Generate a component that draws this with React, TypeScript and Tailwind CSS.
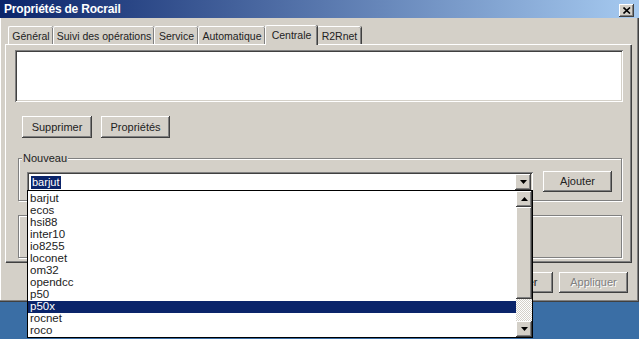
import React from 'react';

const raised =
  'bg-[#d4d0c8] shadow-[inset_-1px_-1px_0_#404040,inset_1px_1px_0_#ffffff,inset_-2px_-2px_0_#808080,inset_2px_2px_0_#d4d0c8]';
const sunken =
  'bg-white shadow-[inset_1px_1px_0_#808080,inset_-1px_-1px_0_#ffffff,inset_2px_2px_0_#404040,inset_-2px_-2px_0_#d4d0c8]';
const etched = 'border border-[#808080] shadow-[1px_1px_0_#ffffff,inset_1px_1px_0_#ffffff]';

const tabs = [
  { label: 'Général', w: 'w-[45px]' },
  { label: 'Suivi des opérations', w: 'w-[101px]' },
  { label: 'Service', w: 'w-[44px]' },
  { label: 'Automatique', w: 'w-[67px]' },
  { label: 'Centrale', w: 'w-[52px]', active: true },
  { label: 'R2Rnet', w: 'w-[44px]' },
];

const items = ['barjut', 'ecos', 'hsi88', 'inter10', 'io8255', 'loconet', 'om32', 'opendcc', 'p50', 'p50x', 'rocnet', 'roco'];

function Arrow({ up }: { up?: boolean }) {
  return (
    <svg width="7" height="4" viewBox="0 0 7 4">
      <polygon points={up ? '3.5,0 7,4 0,4' : '0,0 7,0 3.5,4'} fill="#000" />
    </svg>
  );
}

function Button({ label, disabled, className = '' }: { label: string; disabled?: boolean; className?: string }) {
  return (
    <div className={`${raised} flex items-center justify-center h-[21px] w-[69px] ${className}`}>
      <span className={disabled ? 'text-[#808080] [text-shadow:1px_1px_0_#ffffff]' : 'text-[#222]'}>{label}</span>
    </div>
  );
}

export default function App() {
  return (
    <div className="w-[639px] h-[339px] bg-[#3a6ea5] relative overflow-hidden font-['Liberation_Sans',Arial,sans-serif] text-[11px] text-[#222] leading-none">
      <div className="h-[302px] bg-[#d4d0c8] flex flex-col shadow-[inset_-1px_-1px_0_#404040,inset_-2px_-2px_0_#808080,inset_1px_0_0_#ffffff]">
        {/* title bar */}
        <div className="h-[18px] flex items-center justify-between pl-[4px] pr-[5px] bg-[linear-gradient(to_right,#0a246a,#a6caf0)]">
          <span className="text-white font-bold text-[12px] tracking-[-0.2px]">Propriétés de Rocrail</span>
          <div className={`${raised} w-[15px] h-[13px] mt-[3px] flex items-center justify-center`}>
            <svg width="8" height="7" viewBox="0 0 8 7">
              <path d="M0.5 0.5 L7 6.5 M7 0.5 L0.5 6.5" stroke="#000" strokeWidth="1.6" />
            </svg>
          </div>
        </div>

        {/* tabs */}
        <div className="flex items-end h-[20px] mt-[6px] pl-[8px] text-[10.5px]">
          {tabs.map((t) =>
            t.active ? (
              <div
                key={t.label}
                className={`${t.w} h-[20px] -mb-[1px] z-10 bg-[#d4d0c8] rounded-t-[2px] flex items-start justify-center pt-[4px] border-l border-t border-white shadow-[inset_-1px_0_0_#808080,1px_0_0_#404040]`}
              >
                {t.label}
              </div>
            ) : (
              <div
                key={t.label}
                className={`${t.w} h-[18px] rounded-t-[2px] flex items-start justify-center pt-[4px] border-l border-t border-white shadow-[inset_-1px_0_0_#808080,1px_0_0_#404040]`}
              >
                {t.label}
              </div>
            )
          )}
        </div>

        {/* tab panel */}
        <div className="ml-[5px] w-[626px] h-[218px] flex flex-col border-l border-t border-white shadow-[inset_-1px_-1px_0_#808080,1px_1px_0_#404040]">
          <div className={`${sunken} ml-[9px] mt-[5px] w-[608px] h-[52px]`} />

          <div className="flex gap-[9px] ml-[16px] mt-[14px]">
            <Button label="Supprimer" className="!w-[70px] !h-[22px]" />
            <Button label="Propriétés" className="!h-[22px]" />
          </div>

          <div className={`${etched} relative ml-[12px] mt-[20px] w-[604px] h-[43px] flex items-start pl-[8px] pt-[13px] gap-[10px]`}>
            <span className="absolute -top-[6px] left-[3px] px-[1px] bg-[#d4d0c8]">Nouveau</span>
            <div className={`${sunken} w-[506px] h-[20px] flex items-center pl-[4px] pr-[2px]`}>
              <span className="bg-[#0a246a] text-white px-[1px] h-[13px] flex items-center">barjut</span>
              <div className="flex-1" />
              <div className={`${raised} w-[16px] h-[16px] flex items-center justify-center`}>
                <Arrow />
              </div>
            </div>
            <Button label="Ajouter" className="-mt-[1px]" />
          </div>

          <div className={`${etched} ml-[12px] mt-[14px] w-[604px] h-[43px]`} />
        </div>

        {/* bottom buttons */}
        <div className="flex justify-end gap-[6px] mt-[10px] pr-[11px]">
          <Button label="OK" />
          <Button label="Annuler" />
          <Button label="Appliquer" disabled />
        </div>
      </div>

      {/* dropdown list overlay */}
      <div className="absolute left-[27px] top-[190px] w-[506px] h-[148px] bg-white border border-black flex text-[11.5px]">
        <div className="flex-1 flex flex-col pt-[2px]">
          {items.map((it) => (
            <div
              key={it}
              className={`h-[12px] flex items-center pl-[2px] ${it === 'p50x' ? 'bg-[#0a246a] text-white' : ''}`}
            >
              {it}
            </div>
          ))}
        </div>
        <div className="w-[16px] flex flex-col">
          <div className={`${raised} h-[16px] flex items-center justify-center`}>
            <Arrow up />
          </div>
          <div className={`${raised} h-[92px]`} />
          <div className="flex-1 bg-[image:repeating-conic-gradient(#d4d0c8_0%_25%,#ffffff_0%_50%)] bg-[length:2px_2px]" />
          <div className={`${raised} h-[16px] flex items-center justify-center`}>
            <Arrow />
          </div>
        </div>
      </div>
    </div>
  );
}
